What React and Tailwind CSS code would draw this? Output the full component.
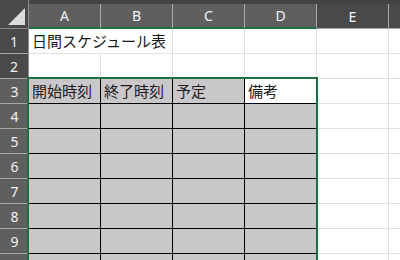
const cols = ["A", "B", "C", "D", "E"];

function Corner() {
  return (
    <div className="w-[29px] h-[29px] shrink-0 bg-[#4a494a] border-r border-b border-[#8c8b8c] flex items-end justify-end pr-[3px] pb-[3px]">
      <svg width="17" height="17" viewBox="0 0 17 17">
        <polygon points="17,0 17,17 0,17" fill="#dcdcdc" />
      </svg>
    </div>
  );
}

function ColHeader({ label, selected }) {
  return (
    <div className="w-[72px] h-[29px] shrink-0 flex flex-col">
      <div className="h-[4px] bg-[#444344]" />
      <div
        className={`flex-1 flex items-center justify-center text-[14px] text-[#f2f2f2] border-r border-[#a9a8a9] ${
          selected ? "bg-[#605f60] border-b-2 border-b-[#1e6e45]" : "bg-[#4a494a] border-b border-b-[#a9a8a9]"
        }`}
      >
        {label}
      </div>
    </div>
  );
}

function RowHeader({ n, selected }) {
  return (
    <div
      className={`w-[29px] h-[25px] shrink-0 flex items-center justify-center text-[14px] text-[#f2f2f2] border-b border-[#a9a8a9] ${
        selected ? "bg-[#605f60]" : "bg-[#4a494a] border-r border-r-[#8c8b8c]"
      }`}
    >
      {n}
    </div>
  );
}

function Cell({ text, kind, spill }) {
  // kind: plain | gray | active
  const base = "w-[72px] h-[25px] shrink-0 flex items-center pl-[3px] text-[15px] text-[#1b1b1b] whitespace-nowrap";
  if (kind === "gray") return <div className={`${base} bg-[#c9c7ca] border-r border-b border-black`}>{text}</div>;
  if (kind === "active") return <div className={`${base} bg-white border-r border-b border-black`}>{text}</div>;
  return (
    <div className={`${base} bg-white border-r border-b border-[#e1e1e1] ${spill ? "border-r-white" : ""}`}>
      <span className="relative z-10">{text}</span>
    </div>
  );
}

export default function App() {
  const rows = [
    ["日間スケジュール表", "", "", "", ""],
    ["", "", "", "", ""],
    ["開始時刻", "終了時刻", "予定", "備考", ""],
  ];
  for (let i = 0; i < 7; i++) rows.push(["", "", "", "", ""]);

  return (
    <div
      className="relative w-[400px] h-[260px] overflow-hidden bg-white"
      style={{ fontFamily: '"Noto Sans", "Noto Sans CJK JP", sans-serif' }}
    >
      <div className="flex">
        <Corner />
        {cols.map((c, i) => (
          <ColHeader key={c} label={c} selected={i < 4} />
        ))}
        <div className="flex-1 h-[29px] flex flex-col">
          <div className="h-[4px] bg-[#444344]" />
          <div className="flex-1 bg-[#4a494a] border-b border-[#a9a8a9]" />
        </div>
      </div>

      {rows.map((r, ri) => (
        <div key={ri} className="flex">
          <RowHeader n={ri < 9 ? ri + 1 : ""} selected={ri >= 2} />
          {r.map((t, ci) => {
            let kind = "plain";
            if (ri >= 2 && ci < 4) kind = ri === 2 && ci === 3 ? "active" : "gray";
            return <Cell key={ci} text={t} kind={kind} spill={ri === 0 && ci === 0} />;
          })}
          <div className="flex-1 h-[25px] border-b border-[#e1e1e1]" />
        </div>
      ))}

      {/* selection outline */}
      <div className="absolute left-[27px] top-[77px] w-[291px] h-[200px] border-2 border-[#1e6e45] pointer-events-none" />
    </div>
  );
}
